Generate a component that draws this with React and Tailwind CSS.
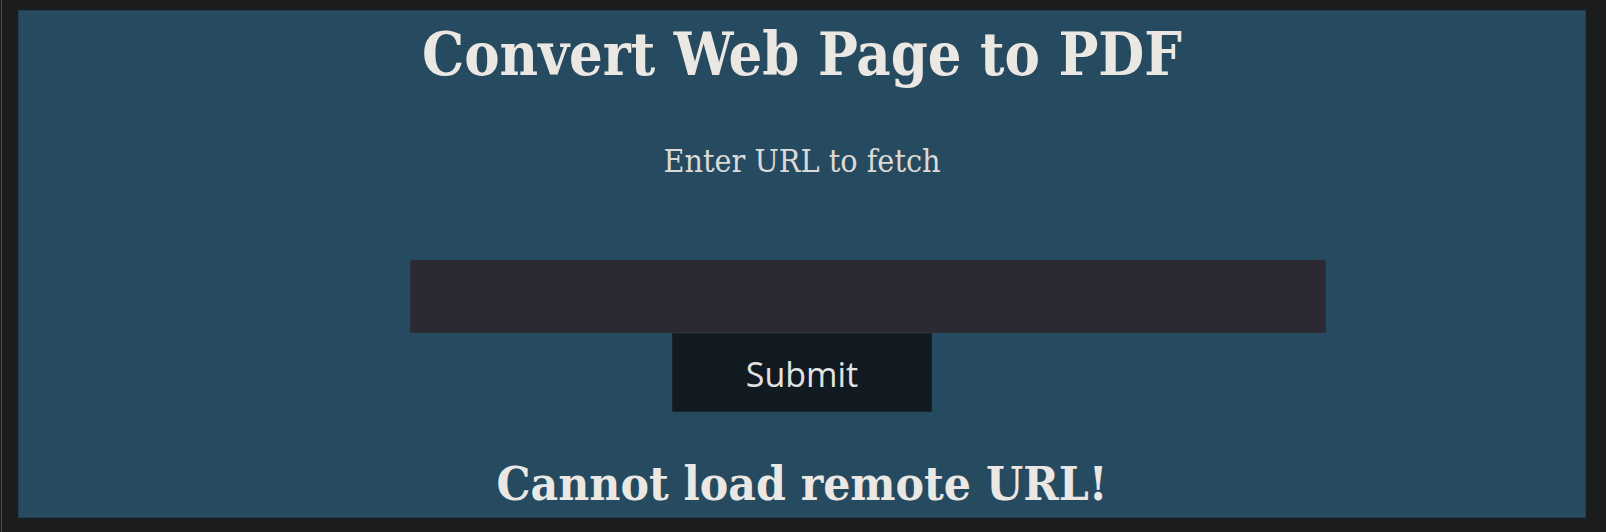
import { useState } from 'react';

const serif = '[font-family:"DejaVu_Serif_Condensed","DejaVu_Serif",serif]';

export default function App() {
  const [url, setUrl] = useState('');

  return (
    <div className="relative h-[532px] w-[1606px] overflow-hidden bg-[#1b1c1e]">
      {/* thin window edge on the left */}
      <div className="absolute left-[1px] top-0 h-full w-px bg-[#4a4b4d]" />

      <div className="pl-[18px] pt-[10px]">
        <div className="h-[508px] w-[1568px] overflow-hidden border border-[#203f53] bg-[#264a60]">
          <div className={`flex flex-col ${serif} text-[#ebe8e3]`}>
            <h1 className="mt-[14px] self-center text-[59px] font-bold leading-none">
              Convert Web Page to PDF
            </h1>

            <p className="mt-[61px] self-center text-[32px] leading-none text-[#dcdad6]">
              Enter URL to fetch
            </p>

            <form onSubmit={(e) => e.preventDefault()} className="mt-[83px] flex flex-col">
              <input
                type="text"
                value={url}
                onChange={(e) => setUrl(e.target.value)}
                className="ml-[391px] h-[73px] w-[916px] border border-[#2f2e37] bg-[#2b2a33] px-3 text-[24px] text-[#e0e0e0] outline-none"
              />
              <button
                type="submit"
                className="ml-[653px] flex h-[79px] w-[260px] items-center justify-center border border-[#1b252e] bg-[#121a21] pt-[3px] text-[34px] text-[#e2e2e2] [font-family:'Open_Sans','Noto_Sans',sans-serif]"
              >
                Submit
              </button>
            </form>

            <h2 className="mt-[48px] self-center text-[47.5px] font-bold leading-none">
              Cannot load remote URL!
            </h2>
          </div>
        </div>
      </div>
    </div>
  );
}
